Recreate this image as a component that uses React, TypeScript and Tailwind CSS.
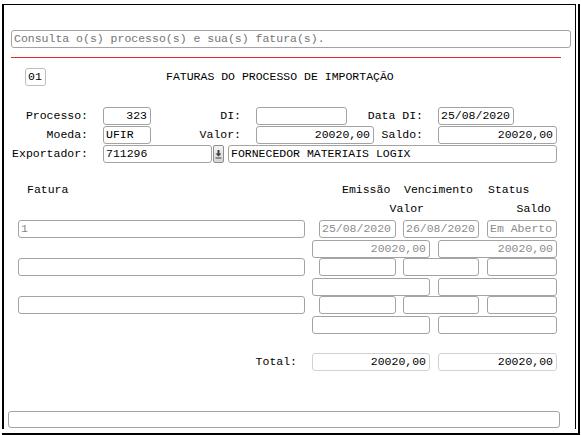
import React from 'react'

type FieldProps = {
  className?: string
  value?: string
  right?: boolean
  light?: boolean
  tone?: string
}

// Bordered read-only box used for every value on the form
function Field({ className = '', value = '', right, light, tone = 'text-black' }: FieldProps) {
  return (
    <div
      className={`flex h-[18px] shrink-0 items-center overflow-hidden rounded-[3px] border bg-white ${
        light ? 'border-[#d2d2d2]' : 'border-[#a3a3a3]'
      } ${right ? 'justify-end pr-[3px]' : 'pl-[2px]'} ${tone} ${className}`}
    >
      <span className="whitespace-pre">{value}</span>
    </div>
  )
}

function Label({ className = '', children }: { className?: string; children: React.ReactNode }) {
  return <div className={`shrink-0 whitespace-pre text-right ${className}`}>{children}</div>
}

function LookupButton() {
  return (
    <div className="ml-[1px] flex h-[18px] w-[11px] shrink-0 items-center justify-center rounded-[2px] border border-[#8e8e8e] bg-gradient-to-b from-[#f4f4f4] to-[#d6d6d6]">
      <svg width="7" height="10" viewBox="0 0 7 10">
        <path d="M2.5 1h2v3.5h2L3.5 7.5 0.5 4.5h2z" fill="#404040" />
        <rect x="0.5" y="8.5" width="6" height="1" fill="#404040" />
      </svg>
    </div>
  )
}

type Invoice = {
  numero: string
  emissao: string
  vencimento: string
  status: string
  valor: string
  saldo: string
}

const invoices: Invoice[] = [
  { numero: '1', emissao: '25/08/2020', vencimento: '26/08/2020', status: 'Em Aberto', valor: '20020,00', saldo: '20020,00' },
  { numero: '', emissao: '', vencimento: '', status: '', valor: '', saldo: '' },
  { numero: '', emissao: '', vencimento: '', status: '', valor: '', saldo: '' },
]

const muted = 'text-[#8c8c8c]'

export default function App() {
  return (
    <div className="h-[435px] w-[581px] overflow-hidden bg-white font-['Liberation_Mono',monospace] text-[11.5px] leading-none text-black">
      <div className="ml-[2px] h-[431px] w-[578px] border-r-2 border-b-2 border-black">
        <div className="mt-[4px] flex h-[425px] w-[574px] flex-col border-t border-l-2 border-r border-black">
          {/* description */}
          <Field
            className="mt-[25px] ml-[7px] w-[560px]"
            value="Consulta o(s) processo(s) e sua(s) fatura(s)."
            tone="text-[#747474]"
          />
          <div className="mt-[9px] ml-[7px] h-px w-[550px] bg-[#e0282a]" />

          {/* title */}
          <div className="mt-[10px] flex h-[18px] items-center">
            <div className="ml-[21px] flex h-[18px] w-[21px] items-center rounded-[3px] border border-[#bdbdbd] pl-[2px]">
              01
            </div>
            <div className="ml-[120px]">FATURAS DO PROCESSO DE IMPORTAÇÃO</div>
          </div>

          {/* process header */}
          <div className="mt-[21px] flex flex-col gap-[1px]">
            <div className="flex items-center">
              <Label className="w-[84px]">Processo:</Label>
              <Field className="ml-[15px] w-[48px]" value="323" right />
              <Label className="w-[90px]">DI:</Label>
              <Field className="ml-[15px] w-[91px]" />
              <Label className="w-[76px]">Data DI:</Label>
              <Field className="ml-[15px] w-[76px]" value="25/08/2020" />
            </div>
            <div className="flex items-center">
              <Label className="w-[84px]">Moeda:</Label>
              <Field className="ml-[15px] w-[48px]" value="UFIR" />
              <Label className="w-[90px]">Valor:</Label>
              <Field className="ml-[15px] w-[118px]" value="20020,00" right />
              <Label className="w-[49px]">Saldo:</Label>
              <Field className="ml-[15px] w-[119px]" value="20020,00" right />
            </div>
            <div className="flex items-center">
              <Label className="w-[84px]">Exportador:</Label>
              <Field className="ml-[15px] w-[109px]" value="711296" />
              <LookupButton />
              <Field className="ml-[4px] w-[329px]" value="FORNECEDOR MATERIAIS LOGIX" />
            </div>
          </div>

          {/* invoice grid headers */}
          <div className="mt-[20px] flex h-[14px] items-center">
            <div className="w-[338px] pl-[23px]">Fatura</div>
            <div className="w-[62px]">Emissão</div>
            <div className="w-[84px]">Vencimento</div>
            <div>Status</div>
          </div>
          <div className="mt-[5px] flex h-[14px] items-center">
            <div className="ml-[308px] w-[118px] pr-[6px] text-right">Valor</div>
            <div className="ml-[8px] w-[119px] pr-[6px] text-right">Saldo</div>
          </div>

          {/* invoices */}
          <div className="mt-[4px] flex flex-col">
            {invoices.map((inv, i) => (
              <div key={i} className="flex flex-col">
                <div className="flex">
                  <Field className="ml-[14px] w-[287px]" value={inv.numero} tone="text-[#7f8a98]" />
                  <Field className="ml-[14px] w-[77px] pl-[1px]" value={inv.emissao} tone={muted} />
                  <Field className="ml-[7px] w-[76px] pl-[1px]" value={inv.vencimento} tone={muted} />
                  <Field className="ml-[8px] w-[70px] pl-[1px]" value={inv.status} tone={muted} />
                </div>
                <div className="mt-[2px] flex">
                  <Field className="ml-[308px] w-[118px]" value={inv.valor} right tone={muted} />
                  <Field className="ml-[8px] w-[119px]" value={inv.saldo} right tone={muted} />
                </div>
              </div>
            ))}
          </div>

          {/* totals */}
          <div className="mt-[19px] flex items-center">
            <Label className="w-[293px]">Total:</Label>
            <Field className="ml-[15px] w-[118px]" value="20020,00" right light />
            <Field className="ml-[8px] w-[119px]" value="20020,00" right light />
          </div>

          {/* status bar */}
          <Field className="mt-[40px] ml-[4px] !h-[17px] w-[552px]" />
        </div>
      </div>
    </div>
  )
}
